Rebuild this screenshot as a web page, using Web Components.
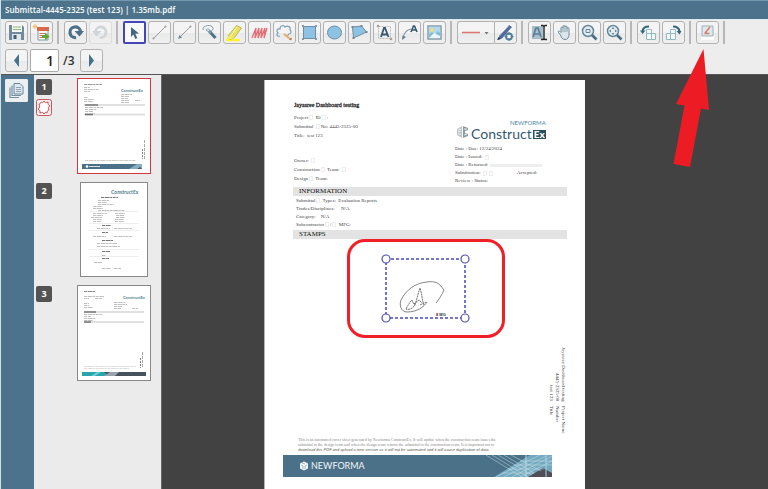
<!DOCTYPE html>
<html lang="en">
<head>
<meta charset="utf-8">
<meta name="viewport" content="width=device-width, initial-scale=1">
<title>Submittal-4445-2325 (test 123) | 1.35mb.pdf</title>
<style>
html, body { margin: 0; height: 100%; }
body { font-family: "Open Sans", "Noto Sans", sans-serif; overflow: hidden; }
</style>
</head>
<body>
<pdf-viewer></pdf-viewer>
<script>
const ICONS = {
  save: '<path d="M4 4h13l2 2v13H4z" fill="#71899a"/><path d="M7 4h10v7H7z" fill="#f4f7f4"/><path d="M8 6h8M8 8.5h8" stroke="#8fb37a"/><path d="M7 13h9v6H7z" fill="#dfe6ea"/><path d="M8.500 14h3v4h-3z" fill="#3e5f75"/>',
  exportDoc: '<path d="M8 7h10v12H8z" fill="#fbfbfb" stroke="#7f97a5"/><path d="M7 6h12v4H7z" fill="#d9694c"/><path d="M9.500 12.500h7M9.500 14.500h7M9.500 16.500h4" stroke="#c9785e"/><path d="M5 3v5M2.500 5.500h5M3.500 4l3 3M6.500 4l-3 3" stroke="#f3bf6b"/><path d="M12 14h3v-2.500l4.500 4-4.500 4V17h-3z" fill="#61a636"/>',
  undo: '<path d="M12 16.500A5.300 5.300 0 1 1 16.500 10.500" fill="none" stroke="#4d7088" stroke-width="3.200"/><path d="M10.500 10h9.500l-4.500 5.500z" fill="#4d7088"/>',
  redo: '<path d="M11 16.500A5.300 5.300 0 1 0 6.500 10.500" fill="none" stroke="#cfd6da" stroke-width="2.800"/><path d="M3 10h9.500L7.500 15.500z" fill="#cfd6da"/>',
  cursor: '<path d="M8 6l8 6.500-3.700.3 2 4.300-2 .9-1.900-4.400L8 16z" fill="#46687e"/>',
  line: '<path d="M6 17L17 6" stroke="#9a9a9a"/><circle cx="5.500" cy="17.500" r="1" fill="#999"/><circle cx="17.500" cy="5.500" r="1" fill="#999"/>',
  arrow: '<path d="M6 17L17 6" stroke="#9a9a9a"/><path d="M5 18l1.500-4L9 16.500z" fill="#6d8796"/><circle cx="17.500" cy="5.500" r="1" fill="#999"/>',
  lens: '<path d="M5 9c-1-5 9-6 10-2 1 3-5 5-7 2 1-2 4-1 4 1" fill="none" stroke="#7b9caf"/><path d="M12 11l5.500 6" stroke="#4f7288" stroke-width="3"/><circle cx="12" cy="11" r="1.800" fill="#7594a6"/>',
  marker: '<path d="M3 19h14" stroke="#fff22e" stroke-width="2.500"/><path d="M5 15l8.500-10.500 5 2.500-7 9.500-5 2z" fill="#e9e162" stroke="#b0a74c" stroke-width=".8"/><path d="M5 15l-1.500 3 3 .5 5-2z" fill="#f5ee5e"/><path d="M14 6l-6 9" stroke="#fffbb5"/>',
  hatch: '<path d="M4 17L8 7l-1 10 4-10-1 10 4-10-1 10 4-10-1 10 3-10" fill="none" stroke="#e26d74" stroke-width="1.300"/>',
  cloud: '<path d="M7 15c-3 1-4-2-2-3-2-2-1-5 2-4 0-4 4-4 5-2 3-2 6 0 5 3 2 1 1 4-1 4-1 2-3 2-4 0" fill="none" stroke="#7da0b4" stroke-width="1.200"/><path d="M11 13l5 4" stroke="#e4b05d" stroke-width="2"/><circle cx="17.500" cy="18" r="1.300" fill="#c67a4f"/>',
  rect: '<path d="M5.500 5.500h12v12h-12z" fill="#8dc2e4" stroke="#6c8da4"/><path d="M4 4h2v2H4zM17 4h2v2h-2zM4 17h2v2H4zM17 17h2v2h-2z" fill="#8598a5"/>',
  ellipse: '<ellipse cx="11.500" cy="11.500" rx="7" ry="6.500" fill="#8dc2e4" stroke="#6c8da4"/>',
  polygon: '<path d="M4.500 6l9-1 5 6-13 6z" fill="#8dc2e4" stroke="#6c8da4"/><path d="M3.500 5h2v2h-2zM12.500 4h2v2h-2zM17.500 10h2v2h-2zM4.500 16h2v2h-2z" fill="#77858e"/>',
  textBox: '<path d="M5.500 5.500h12v12h-12z" fill="none" stroke="#bbb" stroke-dasharray="2 1"/><circle cx="5" cy="5" r="1.300" fill="#b69b86"/><circle cx="18" cy="18" r="1.300" fill="#b69b86"/><path d="M8 16L11 7h1L15.500 16M9 13.500h5" fill="none" stroke="#375870" stroke-width="1.800"/>',
  callout: '<path d="M5 17c1-5 3-8 8-9" fill="none" stroke="#879ba7" stroke-width="1.200"/><path d="M4 19l.5-4.500L8 16z" fill="#657d8c"/><path d="M13 11l2.500-6h1L19 11M14 9h4" fill="none" stroke="#375870" stroke-width="1.600"/>',
  image: '<path d="M5 5h13v13H5z" fill="#fff" stroke="#839eab" stroke-width="1.500"/><path d="M6 6h11v7H6z" fill="#aed9ef"/><path d="M6 17v-4l3-2 3 3 3-4 2 2v5z" fill="#83bcd4"/><circle cx="9" cy="9" r="2" fill="#f1d98a"/><path d="M6 17l5-5 6 3v2z" fill="#edf6f7"/>',
  pen: '<path d="M4 17L15 4l3 2L8 17.500 3.500 19z" fill="#52699e"/><path d="M5 15L15 5" stroke="#8da0c8"/><path d="M3 19l2-3 1.500 2z" fill="#26384a"/><circle cx="15" cy="15.500" r="3" fill="#e9edef" stroke="#557c94" stroke-width="1.800"/><path d="M15 11v9M10.500 15.500h9" stroke="#557c94"/><circle cx="15" cy="15.500" r="1.500" fill="#fff"/>',
  textSelect: '<path d="M4 5h11v13H4z" fill="#a6bfcc"/><path d="M5 16L8 7h2l3 9M6 13h6" fill="none" stroke="#5d7f94" stroke-width="1.700"/><path d="M13 4.500h2l1 1 1-1h2M16 5v13M13 18.500h2l1-1 1 1h2" fill="none" stroke="#252525" stroke-width="1.400"/>',
  hand: '<path d="M7.500 14L5.500 11.500c-1-1.500.7-2.200 1.700-.8l.8.8V7c0-1.400 2-1.400 2 0V5.500c0-1.400 2-1.400 2 0V6c0-1.400 2-1.400 2 0v1.500c0-1.300 2-1.300 2 0V14c0 2.500-1.500 4.500-4 4.500S8.500 17 7.500 14z" fill="#dce5e9" stroke="#718d9e"/><path d="M10 7v4M12 6v5M14 7v4" stroke="#8fa5b1"/>',
  zoomArea: '<circle cx="10" cy="10" r="5.500" fill="#e4edf2" stroke="#65869a" stroke-width="1.500"/><path d="M8 8.500h4v3H8z" fill="none" stroke="#65869a"/><path d="M14 14l4.500 4.500" stroke="#4c6e85" stroke-width="2.600"/>',
  zoomFit: '<circle cx="10" cy="10" r="5.500" fill="#e4edf2" stroke="#65869a" stroke-width="1.500"/><path d="M10 6l1.500 2h-3zM10 14l1.500-2h-3zM6 10l2-1.500v3zM14 10l-2-1.500v3z" fill="#65869a"/><path d="M14 14l4.500 4.500" stroke="#4c6e85" stroke-width="2.600"/>',
  rotateLeft: '<path d="M9.500 8.500h5v4h4v6h-9zM9.500 12.500h5v6" fill="#f5fafb" stroke="#93b8c4"/><path d="M5.500 11C5.500 7 8 5.500 12 5.500" fill="none" stroke="#32677c" stroke-width="2.200"/><path d="M3 9.500h5.500L5.500 13z" fill="#32677c"/>',
  rotateRight: '<path d="M4.500 12.500h4v-4h5v10h-9zM8.500 18.500v-6h5" fill="#f5fafb" stroke="#93b8c4"/><path d="M11 5.500c4 0 6 1.500 6.500 5" fill="none" stroke="#32677c" stroke-width="2.200"/><path d="M14.500 10h5L17.500 13.500z" fill="#32677c"/>',
  stamp: '<path d="M5 15h13v4H5z" fill="#fff"/><path d="M6 5h11v10H6z" fill="#dfe8ec" stroke="#9db0bb"/><path d="M9 12l5-6M8.500 12.500h5M9 12l2-.5" stroke="#d2826b" stroke-width="1.500"/>',
  prev: '<path d="M14 5v13L9 11.500z" fill="#45728a"/>',
  next: '<path d="M9 5v13l5-6.500z" fill="#45728a"/>',
  pages: '<path d="M5 8.500v10h9" fill="none" stroke="#72909f" stroke-width="1.200"/><path d="M7 6.500v10h9" fill="none" stroke="#72909f" stroke-width="1.200"/><path d="M9 4.500h6l3 3v7.500H9z" fill="#dde9ef" stroke="#668698"/><path d="M11 8.500h5M11 10.500h5M11 12.500h5" stroke="#88a3b2"/>'
};

class BaseElement extends HTMLElement {
  connectedCallback() {
    if (this.shadowRoot) return;
    this.attachShadow({ mode: 'open' }).innerHTML = this.render();
  }
}

customElements.define('tool-button', class extends BaseElement {
  render() {
    const off = this.hasAttribute('disabled') ? 'disabled' : '';
    return `<style>
      :host { display: block; flex: none; }
      button { display: block; box-sizing: border-box; width: 23px; height: 23px; padding: 0; border: 1px solid #b2b2b2; border-radius: 3px; background: linear-gradient(#f4f4f4 50%, #e8e9ea 52%, #f0f0f0); overflow: hidden; }
      button:disabled { border-color: #dcdcdc; }
      :host([active]) button { border: 2px solid #4545ba; border-radius: 2px; background: #f8f8f8; }
      :host([joined]) button { border-radius: 0 3px 3px 0; }
      :host([plain]) button { border-color: #e7edf0; border-radius: 1px; background: #edf0f1; }
      svg { display: block; margin: -1px; fill: none; }
      :host([active]) svg { margin: -2px; }
    </style><button type="button" aria-label="${this.getAttribute('label')}" ${off}><svg width="23" height="23" viewBox="0 0 23 23" aria-hidden="true">${ICONS[this.getAttribute('icon')]}</svg></button>`;
  }
});

customElements.define('tool-separator', class extends BaseElement {
  render() {
    return `<style>:host { display: block; flex: none; width: 2px; height: 23px; margin: 0 3px 0 2px; background: #b7b7b7; }</style>`;
  }
});

customElements.define('line-style', class extends BaseElement {
  render() {
    return `<style>
      :host { display: flex; flex: none; }
      button { box-sizing: border-box; width: 37px; height: 23px; padding: 0; border: 1px solid #b2b2b2; border-right: 0; border-radius: 3px 0 0 3px; background: linear-gradient(#f4f4f4 50%, #e8e9ea 52%, #f0f0f0); }
      svg { display: block; }
    </style><button type="button" aria-label="Line style" aria-haspopup="true"><svg width="36" height="21" viewBox="0 0 36 21" aria-hidden="true"><path d="M4 10.500h18" stroke="#de7371" stroke-width="1.500"/><path d="M26.500 10h4l-2 2.500z" fill="#777"/></svg></button><slot></slot>`;
  }
});

customElements.define('title-bar', class extends BaseElement {
  render() {
    return `<style>
      :host { display: block; padding: 0 4px; height: 18px; border-top: 1px solid #7599ac; background: #4c738b; color: #f3f7f9; font: 600 8px/17px "Noto Sans", "Open Sans", sans-serif; }
      h1 { margin: 0; font: inherit; white-space: nowrap; }
    </style><h1><slot></slot></h1>`;
  }
});

customElements.define('page-nav', class extends BaseElement {
  render() {
    return `<style>
      :host { display: flex; align-items: center; gap: 2px; color: #333; }
      input { box-sizing: border-box; width: 29px; height: 23px; margin: 0; padding: 0 4px; border: 1px solid #aaa; border-radius: 2px; background: #fff; color: #222; font: 600 14px "Open Sans", sans-serif; text-align: right; }
      label { display: flex; align-items: center; gap: 4px; margin-right: 3px; font: 600 12px/23px "Open Sans", sans-serif; }
    </style><tool-button icon="prev" label="Previous page"></tool-button><label><input value="1" aria-label="Page number"><span>/3</span></label><tool-button icon="next" label="Next page"></tool-button>`;
  }
});

customElements.define('tool-bar', class extends BaseElement {
  render() {
    const b = (icon, label, extra = '') => `<tool-button icon="${icon}" label="${label}" ${extra}></tool-button>`;
    const s = '<tool-separator></tool-separator>';
    return `<style>
      :host { display: grid; gap: 5px; padding: 1px 4px 2px; border-top: 1px solid #dce9ef; border-bottom: 1px solid #555; background: #ededed; }
      div { display: flex; gap: 2px; }
    </style>
    <div role="toolbar" aria-label="Markup tools">
    ${b('save', 'Save')}${b('exportDoc', 'Export')}${s}
    ${b('undo', 'Undo')}${b('redo', 'Redo', 'disabled')}${s}
    ${b('cursor', 'Select', 'active')}${b('line', 'Line')}${b('arrow', 'Arrow')}${b('lens', 'Freehand')}${b('marker', 'Highlighter')}${b('hatch', 'Hatch')}${b('cloud', 'Cloud')}${b('rect', 'Rectangle')}${b('ellipse', 'Ellipse')}${b('polygon', 'Polygon')}${b('textBox', 'Text box')}${b('callout', 'Callout')}${b('image', 'Image')}${s}
    <line-style>${b('pen', 'Pen settings', 'joined')}</line-style>${s}
    ${b('textSelect', 'Select text')}${b('hand', 'Pan')}${b('zoomArea', 'Zoom to area')}${b('zoomFit', 'Zoom to fit')}${s}
    ${b('rotateLeft', 'Rotate left')}${b('rotateRight', 'Rotate right')}${s}
    ${b('stamp', 'Signature stamp')}${s}
    </div><page-nav></page-nav>`;
  }
});

/* Small grey strokes that stand for the lines of a miniature page: [x, y, width] */
const strokes = (rows, color = '#c0c0c0') => rows.map(([x, y, w]) =>
  `<path d="M${x} ${y}.500h${w}" stroke="${color}" stroke-dasharray="3 .6 5 .5 2 .6"/>`).join('');
const miniLogo = (x, y, size) => `<text x="${x}" y="${y}" font-family="Lato, sans-serif" font-size="${size}" font-weight="700" fill="#4f8090">ConstructEx</text>`;
const THUMBS = {
  1: strokes([[7, 6, 18]], '#999') + strokes([[7, 9, 6], [7, 11, 15], [7, 13, 6], [7, 19, 4], [7, 21, 10], [7, 23, 9], [44, 16, 11], [44, 18, 8], [44, 20, 7], [58, 22, 5], [44, 22, 8], [44, 24, 8], [8, 29, 18], [8, 31, 12], [8, 33, 8], [8, 35, 10]])
    + '<path d="M7 27h61M7 36.500h61" stroke="#e0e0e0" stroke-width="2"/><path d="M8 27h13M8 36.500h8" stroke="#777" stroke-width="1.500"/>' + miniLogo(44, 14, 4)
    + '<path d="M67.500 62v20" stroke="#aaa" stroke-dasharray="3 1"/><path d="M65.500 71v10" stroke="#888" stroke-dasharray="2 1"/>' + strokes([[8, 82, 51]], '#ccc')
    + '<path d="M5 86h60v5H5z" fill="#4b7189"/><path d="M52 91l8-5h5v5z" fill="#82aebf"/><path d="M60 91l3-2 2 2z" fill="#555"/><circle cx="10" cy="88.500" r="1.300" fill="#fff"/><path d="M12 88.500h11" stroke="#ddd"/>',
  2: miniLogo(31, 12, 5) + strokes([[21, 15, 17]], '#777') + strokes([[18, 18, 11], [18, 20, 9], [18, 22, 16], [13, 24, 9], [13, 26, 10], [18, 28, 27], [13, 31, 14], [13, 33, 10], [11, 35, 12], [13, 37, 9], [13, 39, 8], [35, 31, 10], [36, 33, 8], [36, 35, 9], [35, 37, 9], [35, 39, 9], [17, 46, 13], [34, 46, 18], [13, 54, 13], [34, 54, 18], [17, 61, 20], [17, 64, 23], [22, 73, 4], [14, 80, 8], [22, 86, 9], [34, 86, 7]])
    + strokes([[22, 43, 9], [22, 50, 6], [22, 58, 11], [22, 69, 8], [22, 76, 7]], '#777') + '<path d="M9 29.500h50M9 41.500h50M9 48.500h50M9 67.500h50M9 74.500h50" stroke="#eee"/>',
  3: strokes([[7, 6, 11]], '#888') + strokes([[7, 11, 20], [7, 13, 5], [18, 13, 7], [7, 18, 5], [7, 20, 5], [7, 22, 9], [37, 17, 12], [37, 19, 13], [37, 21, 8], [37, 23, 7], [55, 23, 6], [7, 29, 18], [7, 31, 7], [7, 33, 12], [7, 35, 9]])
    + '<path d="M7 27h60M7 37h60" stroke="#e0e0e0" stroke-width="2"/><path d="M7 27h12M7 37h7" stroke="#777" stroke-width="1.500"/>' + miniLogo(46, 14, 4)
    + '<path d="M65.500 67v16" stroke="#aaa" stroke-dasharray="3 1"/><path d="M63.500 73v10" stroke="#888" stroke-dasharray="2 1"/>' + strokes([[7, 81, 52], [7, 83, 45]], '#ddd')
    + '<path d="M5 87h64v4H5z" fill="#47525b"/><path d="M5 87h22l5 4H5z" fill="#28a5ad"/><path d="M14 91l6-4h4l-6 4z" fill="#6dced2"/><path d="M27 91l6-4h9l-4 4z" fill="#9aa3a9"/>'
};

customElements.define('page-thumb', class extends BaseElement {
  render() {
    const n = this.getAttribute('page');
    const w = n === '2' ? 66 : 72, h = n === '2' ? 93 : 94;
    return `<style>
      :host { display: grid; grid-template-columns: 16px 1fr; padding: 0 10px 0 2px; }
      .side { display: grid; align-content: start; gap: 4px; padding-top: 1px; }
      b { display: block; height: 16px; border-radius: 2px; background: #535353; color: #fff; text-align: center; font: 700 9px/16px "Open Sans", sans-serif; }
      button { justify-self: end; padding: 0; border: 1px solid #888; background: #fff; }
      .wrap { display: grid; justify-content: end; }
      .wrap.narrow { padding-right: 3px; }
      :host([current]) button { border-color: #d7353d; }
      svg { display: block; fill: none; }
    </style>
    <div class="side"><b>${n}</b>${this.hasAttribute('current') ? '<svg width="16" height="17" viewBox="0 0 16 17" role="img" aria-label="Marked up"><rect x=".5" y=".5" width="15" height="16" rx="2" fill="#f8eded" stroke="#ce555b"/><path d="M5 3c1 1 2 1 3-1 1 2 2 2 4 1 0 2 0 3 2 4-2 1-2 2-1 4-1 0-2 1-2 3-1-1-2-1-3 1-1-2-2-2-4-1 0-2 0-3-2-4 2-1 2-3 1-5 1 0 2-1 2-2z" fill="#fff" stroke="#cb4850"/></svg>' : ''}</div>
    <div class="wrap ${n === '2' ? 'narrow' : ''}"><button type="button" aria-label="Go to page ${n}"><svg width="${w}" height="${h}" viewBox="1 1 ${w} ${h}">${THUMBS[n]}</svg></button></div>`;
  }
});

customElements.define('construct-logo', class extends BaseElement {
  render() {
    return `<style>
      :host { display: grid; grid-template-columns: 14px max-content; align-items: end; column-gap: 1px; color: #35596f; font-family: Lato, sans-serif; }
      small { display: block; text-align: right; font-size: 6px; line-height: 6px; color: #4d86a5; }
      .name { display: flex; align-items: center; gap: 1px; font-size: 14px; line-height: 12px; padding-top: 2px; }
      .ex { padding: 0 1px; background: #2c4c61; color: #fff; font-size: 10px; line-height: 9px; font-weight: 900; }
      svg { display: block; margin-bottom: 1px; }
    </style>
    <svg width="14" height="14" viewBox="0 0 14 14" aria-hidden="true"><path d="M1 4l5-3v12l-5-3z" fill="#bcc4c8"/><path d="M7 1l5 2v2L9 6v2l3 1v2l-5 2z" fill="#8999a2"/><path d="M2 5l3-1M2 7l3-1M2 9l3 0M8 4l3 0M8 10l3-1" stroke="#eef1f2"/></svg>
    <div><small>NEWFORMA</small><div class="name"><span>Construct</span><span class="ex">Ex</span></div></div>`;
  }
});

customElements.define('section-bar', class extends BaseElement {
  render() {
    return `<style>
      :host { display: block; background: #e3e3e3; padding-left: 6px; }
      h3 { margin: 0; font: 7px/9px "Liberation Serif", serif; color: #111; }
    </style><h3><slot></slot></h3>`;
  }
});

customElements.define('signature-stamp', class extends BaseElement {
  render() {
    return `<style>
      :host { display: grid; place-items: center; align-self: start; box-sizing: border-box; width: 158px; height: 99px; margin-left: 54px; border: 3px solid #ef2028; border-radius: 18px; }
      svg { display: block; }
    </style>
    <svg width="90" height="70" viewBox="0 0 90 70" role="img" aria-label="Signature">
      <rect x="5" y="5" width="79" height="59" fill="none" stroke="#4848bd" stroke-width="1.500" stroke-dasharray="3 2"/>
      <g fill="#fff" stroke="#5151b0" stroke-width="1.200"><circle cx="5" cy="5" r="4"/><circle cx="84" cy="5" r="4"/><circle cx="5" cy="64" r="4"/><circle cx="84" cy="64" r="4"/></g>
      <path d="M55 49c3-4 6-8 8-13l-4-5c-3-3-8-4-13-3-12 1-21 8-26 18-2 5 0 12 6 12 10 0 17-5 20-10" fill="none" stroke="#777" stroke-width=".9"/>
      <path d="M25 55c2-4 4-7 6-9 1 3 2 5 3 5-3 4-6 5-9 4M34 51c2-6 3-12 5-17 2 6 2 12 4 17M33 50l5-4 3 3M39 51l6-3" fill="none" stroke="#666" stroke-width=".9" stroke-dasharray="2 .6"/>
      <text x="55" y="62" font-family="Liberation Sans, sans-serif" font-weight="700" font-size="4" fill="#333">8 MG</text>
    </svg>`;
  }
});

customElements.define('newforma-banner', class extends BaseElement {
  render() {
    return `<style>
      :host { display: flex; align-items: center; gap: 2px; height: 22px; padding-left: 16px; background: #4b7189; color: #f2f6f8; font: 9px/22px Lato, sans-serif; }
      .art { margin-left: auto; } svg { display: block; }
    </style>
    <svg width="10" height="10" viewBox="0 0 10 10" aria-hidden="true"><path d="M1 2.500L5 .500l4 2v5l-4 2-4-2z" fill="#f2f6f8"/><path d="M2 4l2 1v3M8 4L6 5v3M3 2l3 1" fill="none" stroke="#7f9dae" stroke-width=".7"/></svg>
    <span>NEWFORMA</span>
    <svg class="art" width="68" height="22" viewBox="0 0 68 22" aria-hidden="true"><path d="M10 22L46 0h22v22z" fill="#73a9bf"/><path d="M44 22l15-9 9 5v4z" fill="#504f58"/><path d="M2 0l36 22M8 0l36 22M14 0l34 20M20 0l30 18M27 0l30 16M12 22L56 0M20 22L62 1M28 22L68 1M36 22L68 6M18 18h32M24 14h36M30 10h38M36 6h32" fill="none" stroke="#c9e0e9" stroke-width=".5"/><path d="M42 0v22" stroke="#b5d8e4"/><path d="M62 0v22" stroke="#a8d1df"/></svg>`;
  }
});

customElements.define('document-page', class extends BaseElement {
  render() {
    return `<style>
      :host { display: flex; flex-direction: column; box-sizing: border-box; width: 321px; min-height: 100%; padding: 20px 18px 12px 28px; border-left: 1px solid #b5b5b5; background: #fff; color: #444; font: 5px/9px "Liberation Serif", serif; }
      p, h2 { margin: 0; white-space: nowrap; }
      h2 { font: 6px/10px "Liberation Serif", serif; -webkit-text-stroke: .3px #333; color: #222; }
      header { display: grid; grid-template-columns: 161px 1fr; padding: 0 0 2px 1px; }
      .ids { margin-top: 3px; } .team { margin-top: 16px; }
      construct-logo { margin: 20px 0 5px 1px; }
      .dates { line-height: 8px; }
      .dates p { display: flex; align-items: center; white-space: pre; }
      .accept { margin-left: 23px; }
      .info { padding: 1px 3px; line-height: 8px; }
      i { display: inline-block; width: 2px; height: 3px; margin: 0 1px; border: 1px solid #eee; vertical-align: -1px; }
      i.long { width: 50px; height: 1px; background: #eee; }
      .side { display: grid; writing-mode: vertical-rl; grid-template-columns: 54px 30px; column-gap: 5px; align-self: end; margin: 9px 1px 0 0; font-size: 5px; line-height: 6px; white-space: nowrap; }
      .side dt { grid-column: 2; margin: 0; } .side dd { grid-column: 1; margin: 0; text-align: end; }
      footer { margin: auto 15px 0 -10px; }
      .note { margin: 0 0 3px 15px; font-size: 4px; line-height: 5px; color: #888; }
      em { font-family: "Liberation Sans", sans-serif; color: #555; }
    </style>
    <header>
      <div>
        <h2>Jayasree Dashboard testing</h2>
        <div class="ids"><p>Project<i></i> ID<i></i>:</p><p>Submittal <i></i>No: 4445-2325-00</p><p>Title: &nbsp;test 123</p></div>
        <div class="team"><p>Owner: <i></i></p><p>Construction<i></i> Team: <i></i></p><p>Design<i></i> Team:</p></div>
      </div>
      <div>
        <construct-logo></construct-logo>
        <div class="dates"><p>Date : Due: 12/24/2024</p><p>Date : Issued: <i></i></p><p>Date : Returned: <i class="long"></i></p><p>Substitution: <i></i><i></i><span class="accept">Accepted:</span></p><p>Review : Status:</p></div>
      </div>
    </header>
    <section-bar>INFORMATION</section-bar>
    <div class="info"><p>Submittal<i></i> Types: &nbsp;Evaluation Reports</p><p>Trades/Disciplines: &nbsp; &nbsp; N/A</p><p>Category: &nbsp; &nbsp;N/A</p><p>Subcontractor<i></i>/<i></i> MFG:</p></div>
    <section-bar>STAMPS</section-bar>
    <signature-stamp></signature-stamp>
    <dl class="side"><dd>Jayasree Dashboard testing</dd><dt>Project Name</dt><dd>4445-2325-00</dd><dt>Number</dt><dd>test 123</dd><dt>Title</dt></dl>
    <footer>
      <div class="note"><p>This is an automated cover sheet generated by Newforma ConstructEx. It will update when the construction team issues the</p><p>submittal to the design team and when the design team returns the submittal to the construction team. It is important not to</p><p><em>download this PDF and upload a new version as it will not be automated and it will cause duplication of data.</em></p></div>
      <newforma-banner></newforma-banner>
    </footer>`;
  }
});

customElements.define('pdf-viewer', class extends BaseElement {
  render() {
    return `<style>
      :host { display: grid; grid-template-rows: auto auto 1fr; position: relative; box-sizing: border-box; height: 100vh; border-left: 1px solid #cfe0e8; overflow: hidden; }
      main { display: grid; grid-template-columns: 33px 128px 1fr; min-height: 0; }
      nav { padding: 4px; background: #4c738b; }
      aside { display: grid; align-content: start; gap: 8px; padding-top: 3px; background: #ebebeb; border-right: 1px solid #666; }
      section { box-sizing: border-box; padding: 5px 0 0 102px; background: #424242; min-width: 0; }
      .pointer { position: absolute; left: 672px; top: 49px; }
    </style>
    <title-bar>Submittal-4445-2325 (test 123) | 1.35mb.pdf</title-bar>
    <tool-bar></tool-bar>
    <main>
      <nav><tool-button icon="pages" label="Page thumbnails" plain></tool-button></nav>
      <aside><page-thumb page="1" current></page-thumb><page-thumb page="2"></page-thumb><page-thumb page="3"></page-thumb></aside>
      <section><document-page></document-page></section>
    </main>
    <svg class="pointer" width="38" height="120" viewBox="0 0 38 120" aria-hidden="true"><path d="M30.500 0L36 61l-8-1.500L17 118 .500 115 11.500 56.500 3 55z" fill="#ed1c24"/></svg>`;
  }
});
</script>
</body>
</html>
